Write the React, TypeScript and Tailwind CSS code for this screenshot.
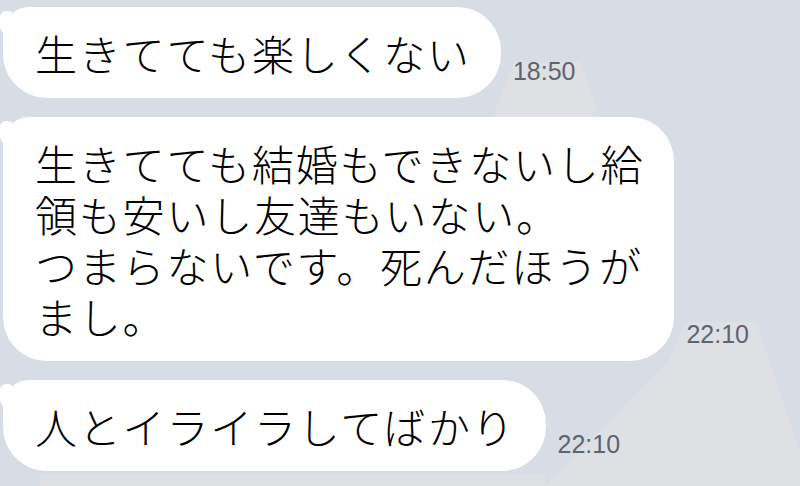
import React from "react";

const jp = { fontFamily: '"Noto Sans CJK JP", "Noto Sans", sans-serif' };
const latin = { fontFamily: '"Liberation Sans", Arial, sans-serif' };

function Bubble({ lines }: { lines: string[] }) {
  return (
    <div
      className="relative ml-[3px] rounded-[44px] rounded-tl-[26px] bg-white py-[20px] pl-[32px] pr-[30px] text-[42px] font-light leading-[51px] tracking-[1.8px] text-black whitespace-pre"
      style={jp}
    >
      <span className="absolute left-[-3px] top-[4px] h-[22px] w-[14px] rounded-[6px] bg-white" />
      {lines.map((l, i) => (
        <div key={i}>{l}</div>
      ))}
    </div>
  );
}

function Row({ lines, time }: { lines: string[]; time: string }) {
  return (
    <div className="flex items-end gap-[12px]">
      <Bubble lines={lines} />
      <span className="pb-[12px] text-[25px] leading-[29px] text-[#5d6472]" style={latin}>
        {time}
      </span>
    </div>
  );
}

export default function App() {
  return (
    <div className="relative h-[486px] w-[800px] overflow-hidden bg-[#d7dce5]">
      {/* lighter dithered patches from the original capture */}
      <svg className="absolute inset-0" width="800" height="486" viewBox="0 0 800 486">
        <polygon points="514,62 580,62 600,117 493,117" fill="#dfe0e3" />
        <polygon points="686,322 756,322 800,452 800,486 545,486 668,362" fill="#dfe0e3" />
        <polygon points="40,475 545,475 545,486 40,486" fill="#dfe0e3" />
      </svg>
      <div className="relative flex flex-col gap-[19px] pt-[7px]">
        <Row lines={["生きてても楽しくない"]} time="18:50" />
        <Row
          lines={[
            "生きてても結婚もできないし給",
            "領も安いし友達もいない。",
            "つまらないです。死んだほうが",
            "まし。",
          ]}
          time="22:10"
        />
        <Row lines={["人とイライラしてばかり"]} time="22:10" />
      </div>
    </div>
  );
}
